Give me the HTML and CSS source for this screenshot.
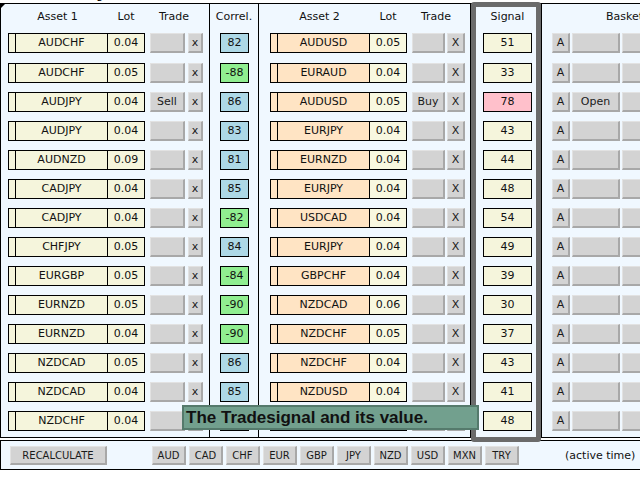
FILE: index.html
```html
<!DOCTYPE html>
<html lang="en">
<head>
<meta charset="UTF-8" />
<title>Correlation Hedge Panel</title>
<link rel="stylesheet" href="styles.css">
</head>
<body>
<div class="caption"><span>Correlation Hedge Panel</span></div>
<div class="board" id="board">
  <div class="sec sec-a1" id="secA1">
    <div class="head">
      <span class="h-asset">Asset 1</span><span class="h-lot">Lot</span><span class="h-trade">Trade</span>
    </div>
  </div>
  <div class="sec sec-cor" id="secCor">
    <div class="head">Correl.</div>
  </div>
  <div class="sec sec-a2" id="secA2">
    <div class="head">
      <span class="h-asset">Asset 2</span><span class="h-lot">Lot</span><span class="h-trade">Trade</span>
    </div>
  </div>
  <div class="sec sec-sig" id="secSig">
    <div class="head">Signal</div>
  </div>
  <div class="sec sec-bsk" id="secBsk">
    <div class="head">Basket</div>
  </div>
  <div class="tip">The Tradesignal and its value.</div>
</div>
<div class="bar">
  <span class="btn recalc">RECALCULATE</span>
  <div class="ccy">
    <span class="btn">AUD</span>
    <span class="btn">CAD</span>
    <span class="btn">CHF</span>
    <span class="btn">EUR</span>
    <span class="btn">GBP</span>
    <span class="btn">JPY</span>
    <span class="btn">NZD</span>
    <span class="btn">USD</span>
    <span class="btn">MXN</span>
    <span class="btn">TRY</span>
  </div>
  <span class="active">(active time)</span>
</div>
<script>
  // asset1, lot1, trade1, correl, asset2, lot2, trade2, signal, basket
  const rows = [
    ['AUDCHF', '0.04', '', 82, 'AUDUSD', '0.05', '', 51, ''],
    ['AUDCHF', '0.05', '', -88, 'EURAUD', '0.04', '', 33, ''],
    ['AUDJPY', '0.04', 'Sell', 86, 'AUDUSD', '0.05', 'Buy', 78, 'Open'],
    ['AUDJPY', '0.04', '', 83, 'EURJPY', '0.04', '', 43, ''],
    ['AUDNZD', '0.09', '', 81, 'EURNZD', '0.04', '', 44, ''],
    ['CADJPY', '0.04', '', 85, 'EURJPY', '0.04', '', 48, ''],
    ['CADJPY', '0.04', '', -82, 'USDCAD', '0.04', '', 54, ''],
    ['CHFJPY', '0.05', '', 84, 'EURJPY', '0.04', '', 49, ''],
    ['EURGBP', '0.05', '', -84, 'GBPCHF', '0.04', '', 39, ''],
    ['EURNZD', '0.05', '', -90, 'NZDCAD', '0.06', '', 30, ''],
    ['EURNZD', '0.04', '', -90, 'NZDCHF', '0.05', '', 37, ''],
    ['NZDCAD', '0.05', '', 86, 'NZDCHF', '0.04', '', 43, ''],
    ['NZDCAD', '0.04', '', 85, 'NZDUSD', '0.04', '', 41, ''],
    ['NZDCHF', '0.04', '', 84, 'NZDJPY', '0.04', '', 48, '']
  ];

  function pairRow(sym, lot, trade, x) {
    return '<div class="row"><div class="pair"><span class="pin"></span>' +
      '<span class="sym">' + sym + '</span><span class="lot">' + lot + '</span></div>' +
      '<span class="btn trade">' + trade + '</span><span class="btn x">' + x + '</span></div>';
  }

  const a1 = document.getElementById('secA1');
  const cor = document.getElementById('secCor');
  const a2 = document.getElementById('secA2');
  const sig = document.getElementById('secSig');
  const bsk = document.getElementById('secBsk');

  rows.forEach(r => {
    a1.insertAdjacentHTML('beforeend', pairRow(r[0], r[1], r[2], 'x'));
    const cls = r[3] < 0 ? 'neg' : 'pos';
    cor.insertAdjacentHTML('beforeend', '<div class="row"><span class="cor ' + cls + '">' + r[3] + '</span></div>');
    a2.insertAdjacentHTML('beforeend', pairRow(r[4], r[5], r[6], 'X'));
    const hot = r[7] >= 70 ? ' hot' : '';
    sig.insertAdjacentHTML('beforeend', '<div class="row"><span class="sigval' + hot + '">' + r[7] + '</span></div>');
    bsk.insertAdjacentHTML('beforeend', '<div class="row"><span class="btn a">A</span><span class="btn wide">' + r[8] + '</span><span class="btn wide"></span></div>');
  });
</script>
</body>
</html>
```

FILE: styles.css
```css
html, body {
  margin: 0; padding: 0; background: #fff; overflow: hidden;
  font-family: "DejaVu Sans", Verdana, sans-serif; font-size: 11px; color: #111;
}
.caption {
  height: 3px; overflow: hidden;
}
.caption span {
  display: block; margin-top: -10px; padding-left: 10px; line-height: 12px; color: #000;
}
.board {
  position: relative; display: flex; width: 720px;
  border-top: 1px solid #000; border-left: 1px solid #000; border-bottom: 1px solid #000;
  background: #f0f8ff;
}
.board::before {
  content: ''; position: absolute; top: 0; left: 0; width: 0; height: 0;
  border-top: 4px solid #000; border-right: 4px solid transparent;
}
.sec {
  display: flex; flex-direction: column;
}
.head {
  height: 26px; line-height: 25px; display: flex; text-align: center;
}
.row {
  height: 29px; padding-top: 3px; box-sizing: border-box; display: flex; align-items: flex-start;
}
.head + .row { height: 30px; }

/* asset columns */
.sec-a1 { width: 209px; border-right: 1px solid #000; padding-left: 7px; box-sizing: border-box; }
.sec-a2 { width: 212px; border-right: 1px solid #000; padding-left: 11px; box-sizing: border-box; }
.h-asset { width: 99px; }
.h-lot { width: 38px; }
.h-trade { width: 58px; padding-right: 4px; }

.pair {
  display: flex; width: 137px; height: 20px; box-sizing: border-box;
  border: 1px solid #000; background: #f5f5dc; line-height: 18px; text-align: center;
}
.pin { width: 6px; border-right: 1px solid #000; }
.sym { width: 91px; border-right: 1px solid #000; }
.lot { flex: 1; }
.sec-a2 .pin, .sec-a2 .sym { background: #ffe4c4; }
.sec-a2 .lot { background: #f8f8e0; }

.btn {
  display: inline-block; height: 20px; box-sizing: border-box; text-align: center; line-height: 18px;
  background: #d3d3d3; border-style: solid; border-width: 1px 2px 2px 1px;
  border-color: #e2e2e2 #a8a8a8 #a8a8a8 #e2e2e2; color: #1a1a1a;
}
.trade { width: 35px; margin-left: 5px; }
.sec-a1 .x { width: 15px; margin-left: 3px; }
.sec-a2 .trade { width: 33px; }
.sec-a2 .x { width: 18px; margin-left: 2px; }

/* correlation */
.sec-cor { width: 49px; border-right: 1px solid #000; box-sizing: border-box; }
.sec-cor .head { justify-content: center; }
.cor {
  width: 29px; height: 20px; margin-left: 10px; box-sizing: border-box;
  border: 1px solid #000; text-align: center; line-height: 18px;
}
.cor.pos { background: #add8e6; }
.cor.neg { background: #90ee90; }

/* signal */
.sec-sig { position: relative; width: 70px; }
.sec-sig .head { justify-content: center; padding-left: 3px; }
.sec-sig::after {
  content: ''; position: absolute; left: 0; right: 0; top: -2px; bottom: -5px;
  border: 5px solid #6b6b6b; border-radius: 3px;
}
.sigval {
  width: 49px; height: 20px; margin-left: 12px; box-sizing: border-box;
  border: 1px solid #000; background: #f5f5dc; text-align: center; line-height: 18px;
}
.sigval.hot { background: #ffc0cb; }

/* basket */
.sec-bsk { border-left: 1px solid #000; padding-left: 10px; flex: 1; }
.sec-bsk .head { padding-left: 54px; }
.sec-bsk .a { width: 18px; }
.sec-bsk .wide { width: 48px; margin-left: 2px; }

.tip {
  position: absolute; left: 181px; top: 401px; width: 291px; height: 21px;
  background: #72a08e; border: 2px solid #557a6c; z-index: 2;
  font-family: "Liberation Sans", Arial, sans-serif; font-weight: bold; font-size: 17px;
  line-height: 21px; padding-left: 2px; color: #111;
}

/* bottom bar */
.bar {
  display: flex; align-items: flex-start; width: 720px; margin-top: 2px;
  border: 1px solid #000; background: #f0f8ff;
  padding: 5px 0 0 9px; box-sizing: border-box; height: 30px;
  font-size: 10px;
}
.bar .btn { height: 19px; line-height: 17px; }
.recalc { width: 97px; }
.ccy { display: flex; gap: 3px; margin-left: 45px; }
.ccy .btn { width: 34px; }
.active { margin-left: 46px; font-size: 11px; line-height: 19px; }
```
